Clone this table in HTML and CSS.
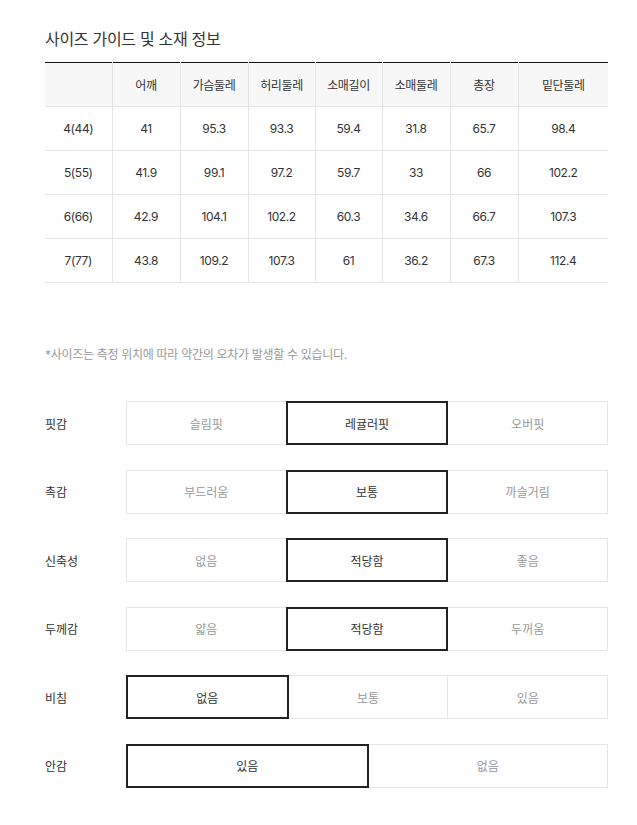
FILE: index.html
```html
<!DOCTYPE html>
<html lang="ko">
<head>
<meta charset="utf-8">
<link rel="stylesheet" href="styles.css">
</head>
<body>
<div class="wrap">
  <h2 class="title">사이즈 가이드 및 소재 정보</h2>
  <table class="size">
    <colgroup>
      <col style="width:67px"><col style="width:68px"><col style="width:68px"><col style="width:67px"><col style="width:67px"><col style="width:68px"><col style="width:68px"><col style="width:90px">
    </colgroup>
    <thead>
      <tr><th></th><th>어깨</th><th>가슴둘레</th><th>허리둘레</th><th>소매길이</th><th>소매둘레</th><th>총장</th><th>밑단둘레</th></tr>
    </thead>
    <tbody>
      <tr><td>4(44)</td><td>41</td><td>95.3</td><td>93.3</td><td>59.4</td><td>31.8</td><td>65.7</td><td>98.4</td></tr>
      <tr><td>5(55)</td><td>41.9</td><td>99.1</td><td>97.2</td><td>59.7</td><td>33</td><td>66</td><td>102.2</td></tr>
      <tr><td>6(66)</td><td>42.9</td><td>104.1</td><td>102.2</td><td>60.3</td><td>34.6</td><td>66.7</td><td>107.3</td></tr>
      <tr><td>7(77)</td><td>43.8</td><td>109.2</td><td>107.3</td><td>61</td><td>36.2</td><td>67.3</td><td>112.4</td></tr>
    </tbody>
  </table>
  <p class="note">*사이즈는 측정 위치에 따라 약간의 오차가 발생할 수 있습니다.</p>
  <div class="feel">
    <div class="row"><div class="label">핏감</div><div class="opts"><div class="opt">슬림핏</div><div class="opt on">레귤러핏</div><div class="opt">오버핏</div></div></div>
    <div class="row"><div class="label">촉감</div><div class="opts"><div class="opt">부드러움</div><div class="opt on">보통</div><div class="opt">까슬거림</div></div></div>
    <div class="row"><div class="label">신축성</div><div class="opts"><div class="opt">없음</div><div class="opt on">적당함</div><div class="opt">좋음</div></div></div>
    <div class="row"><div class="label">두께감</div><div class="opts"><div class="opt">얇음</div><div class="opt on">적당함</div><div class="opt">두꺼움</div></div></div>
    <div class="row"><div class="label">비침</div><div class="opts"><div class="opt on">없음</div><div class="opt">보통</div><div class="opt">있음</div></div></div>
    <div class="row"><div class="label">안감</div><div class="opts"><div class="opt on">있음</div><div class="opt">없음</div></div></div>
  </div>
</div>
</body>
</html>
```
FILE: styles.css
```css
* { box-sizing: border-box; }
body {
  margin: 0;
  background: #fff;
  font-family: Inter, "Noto Sans CJK KR", sans-serif;
  color: #333;
}
.wrap {
  width: 563px;
  margin-left: 45px;
  padding-top: 29px;
}
.title {
  margin: 0 0 13px;
  font-size: 16px;
  font-weight: 400;
  line-height: 20px;
  color: #333;
  letter-spacing: -0.3px;
}
.size {
  width: 563px;
  border-collapse: collapse;
  table-layout: fixed;
  border-top: 1px solid #111;
  font-size: 12px;
  letter-spacing: -0.4px;
}
.size th, .size td {
  height: 44px;
  padding: 0;
  text-align: center;
  font-weight: 400;
  color: #333;
  border-bottom: 1px solid #e4e4e4;
  border-left: 1px solid #e4e4e4;
}
.size th:first-child, .size td:first-child { border-left: none; }
.size thead th { background: #f7f7f7; }
.note {
  margin: 64px 0 0;
  font-size: 12px;
  line-height: 16px;
  color: #999;
  letter-spacing: -0.3px;
}
.feel {
  margin-top: 38px;
  display: flex;
  flex-direction: column;
  gap: 24.6px;
}
.row {
  display: flex;
  align-items: center;
  height: 44px;
}
.label {
  width: 81px;
  font-size: 12px;
  color: #333;
}
.opts {
  flex: 1;
  display: flex;
  height: 100%;
}
.opt {
  flex: 1;
  display: flex;
  align-items: center;
  justify-content: center;
  border: 1px solid #e6e6e6;
  font-size: 12px;
  color: #999;
}
.opt + .opt { margin-left: -1px; }
.opt.on {
  position: relative;
  z-index: 1;
  border: 2px solid #222;
  color: #333;
}
```
